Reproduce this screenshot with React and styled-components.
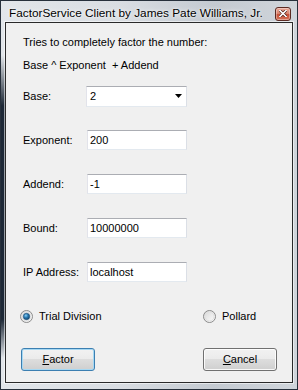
import React from 'react';
import styled, { createGlobalStyle } from 'styled-components';

const Global = createGlobalStyle`
  html, body { margin: 0; padding: 0; background: #ffffff; }
  body { width: 298px; height: 390px; overflow: hidden; }
  * { box-sizing: border-box; }
`;

const Window = styled.div`
  width: 298px;
  height: 390px;
  border: 1px solid #27303b;
  display: flex;
  flex-direction: column;
  padding: 0 4px 6px 4px;
  background:
    linear-gradient(180deg, rgba(29,40,54,0) 14%, #1d2836 27%, #1d2836 82%, rgba(29,40,54,0) 92%) left top / 4px 100% no-repeat,
    linear-gradient(90deg, #e2e6ea 0%, #d9dde2 40%, #c4cad1 72%, #d0d5db 100%);
`;

const TitleBar = styled.div`
  height: 21px;
  flex: none;
  display: flex;
  align-items: center;
  justify-content: space-between;
  padding: 0 2px 0 4px;
`;

const TitleText = styled.span`
  font-family: "Liberation Sans", Arial, sans-serif;
  font-size: 11.8px;
  color: #000;
  text-shadow: 0 0 5px rgba(255,255,255,0.95), 0 0 2px rgba(255,255,255,0.9);
  white-space: nowrap;
  margin-top: 3px;
`;

const CloseButton = styled.div`
  width: 16px;
  height: 14px;
  margin-top: 4px;
  border: 1px solid #5b2a22;
  border-radius: 3px;
  display: flex;
  align-items: center;
  justify-content: center;
  background: linear-gradient(180deg, #eaa898 0%, #da8570 45%, #c64e36 55%, #d4735a 100%);
  box-shadow: inset 0 0 0 1px rgba(255,255,255,0.35);
`;

const Client = styled.div`
  flex: 1;
  border: 1px solid #2a2a2a;
  box-shadow: 0 0 0 1px rgba(255,255,255,0.55);
  background: #f0f0f0;
  padding: 8px 15px 0 14px;
  display: flex;
  flex-direction: column;
  font-family: "Liberation Sans", Arial, sans-serif;
  font-size: 11px;
  color: #000;
`;

const IntroLine = styled.div`
  height: 23px;
  line-height: 23px;
  padding-left: 3px;
  white-space: pre;
`;

const Intro = styled.div`
  margin-bottom: 8px;
`;

const Rows = styled.div`
  display: flex;
  flex-direction: column;
  gap: 22px;
`;

const Row = styled.div`
  height: 22px;
  display: grid;
  grid-template-columns: 67px 100px;
  align-items: center;
`;

const Label = styled.span`
  padding-left: 3px;
  white-space: nowrap;
`;

const TextBox = styled.div`
  height: 20px;
  width: 100px;
  background: #fff;
  border: 1px solid;
  border-color: #abadb3 #dbdfe6 #e3e9ef #e2e3ea;
  padding-left: 2px;
  display: flex;
  align-items: center;
`;

const Combo = styled.div`
  height: 21px;
  width: 101px;
  margin-left: -1px;
  background: #fff;
  border: 1px solid;
  border-color: #abadb3 #dbdfe6 #e3e9ef #e2e3ea;
  padding: 0 4px 0 3px;
  display: flex;
  align-items: center;
  justify-content: space-between;
`;

const RadioRow = styled.div`
  height: 22px;
  display: grid;
  grid-template-columns: 1fr 74px;
  align-items: center;
`;

const RadioItem = styled.label`
  display: flex;
  align-items: center;
  gap: 6px;
  white-space: nowrap;
`;

const ButtonRow = styled.div`
  margin-top: 21px;
  display: grid;
  grid-template-columns: 1fr 74px;
  align-items: center;
`;

const Button = styled.div`
  width: 74px;
  height: 23px;
  border-radius: 3px;
  border: 1px solid ${p => (p.$default ? '#3c7fb1' : '#707070')};
  box-shadow: inset 0 0 0 1px ${p => (p.$default ? '#a6d8f3' : 'rgba(255,255,255,0.85)')};
  background: linear-gradient(180deg, #f2f2f2 0%, #ebebeb 49%, #dddddd 50%, #cfcfcf 100%);
  display: flex;
  align-items: center;
  justify-content: center;
  margin-left: ${p => (p.$default ? '1px' : '0')};
  padding-bottom: 1px;
  span { text-decoration: underline; }
`;

function Radio({ checked }) {
  return (
    <svg width="13" height="13" viewBox="0 0 13 13">
      <defs>
        <linearGradient id="rbg" x1="0" y1="0" x2="1" y2="1">
          <stop offset="0" stopColor="#d6d6d6" />
          <stop offset="1" stopColor="#ffffff" />
        </linearGradient>
        <radialGradient id="rdot" cx="0.4" cy="0.35" r="0.7">
          <stop offset="0" stopColor="#8ad0f5" />
          <stop offset="0.45" stopColor="#2c7cb4" />
          <stop offset="1" stopColor="#0f3e63" />
        </radialGradient>
      </defs>
      <circle cx="6.5" cy="6.5" r="6" fill="url(#rbg)" stroke="#8a8a8a" strokeWidth="1" />
      <circle cx="6.5" cy="6.5" r="4.5" fill="none" stroke="#e0e0e0" strokeWidth="1" />
      {checked && <circle cx="6.5" cy="6.5" r="3.2" fill="url(#rdot)" stroke="#1c4f78" strokeWidth="0.6" />}
    </svg>
  );
}

export default function App() {
  return (
    <>
      <Global />
      <Window>
        <TitleBar>
          <TitleText>FactorService Client by James Pate Williams, Jr.</TitleText>
          <CloseButton>
            <svg width="8" height="7" viewBox="0 0 8 7">
              <path d="M1 0.5 L7 6.5 M7 0.5 L1 6.5" stroke="#4a1a12" strokeWidth="3" strokeLinecap="square" />
              <path d="M1 0.5 L7 6.5 M7 0.5 L1 6.5" stroke="#ffffff" strokeWidth="1.6" strokeLinecap="square" />
            </svg>
          </CloseButton>
        </TitleBar>
        <Client>
          <Intro>
            <IntroLine>Tries to completely factor the number:</IntroLine>
            <IntroLine>{'Base ^ Exponent  + Addend'}</IntroLine>
          </Intro>
          <Rows>
            <Row>
              <Label>Base:</Label>
              <Combo>
                <span>2</span>
                <svg width="7" height="4" viewBox="0 0 7 4">
                  <path d="M0 0 H7 L3.5 4 Z" fill="#000" />
                </svg>
              </Combo>
            </Row>
            <Row>
              <Label>Exponent:</Label>
              <TextBox>200</TextBox>
            </Row>
            <Row>
              <Label>Addend:</Label>
              <TextBox>-1</TextBox>
            </Row>
            <Row>
              <Label>Bound:</Label>
              <TextBox>10000000</TextBox>
            </Row>
            <Row>
              <Label>IP Address:</Label>
              <TextBox>localhost</TextBox>
            </Row>
            <RadioRow>
              <RadioItem><Radio checked />Trial Division</RadioItem>
              <RadioItem><Radio />Pollard</RadioItem>
            </RadioRow>
          </Rows>
          <ButtonRow>
            <Button $default><div><span>F</span>actor</div></Button>
            <Button><div><span>C</span>ancel</div></Button>
          </ButtonRow>
        </Client>
      </Window>
    </>
  );
}
